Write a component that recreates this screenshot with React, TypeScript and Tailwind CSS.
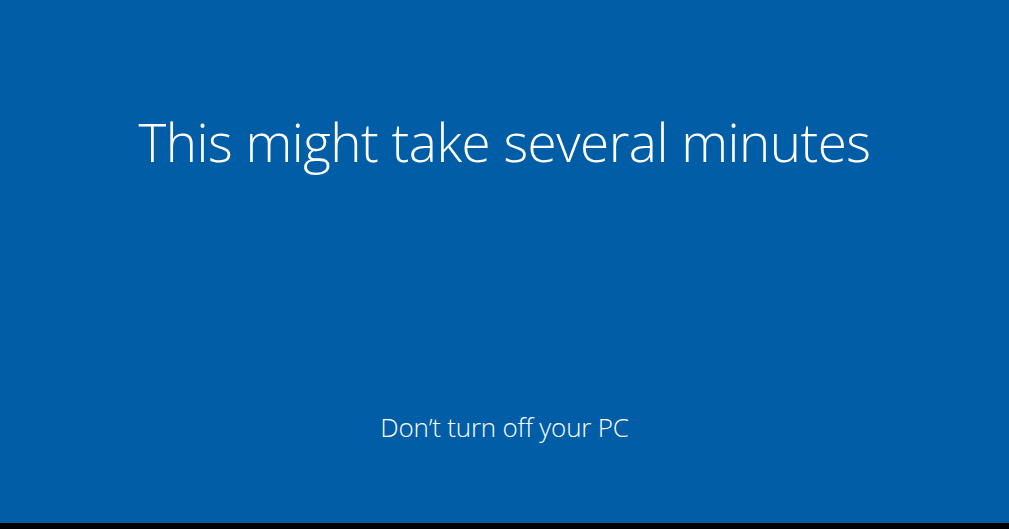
export default function App() {
  return (
    <div className="flex h-[529px] w-full flex-col bg-black">
      <div
        className="flex flex-1 flex-col items-center bg-[#005da6] text-white"
        style={{ fontFamily: '"Open Sans", "Noto Sans", sans-serif' }}
      >
        <h1 className="mt-[102px] text-[53px] font-light leading-[80px] tracking-[-0.5px]">
          This might take several minutes
        </h1>
        <p className="mt-[228px] text-[26px] font-light leading-[34px] tracking-[-0.2px]">
          Don’t turn off your PC
        </p>
      </div>
      <div className="h-[6px] bg-black" />
    </div>
  );
}
